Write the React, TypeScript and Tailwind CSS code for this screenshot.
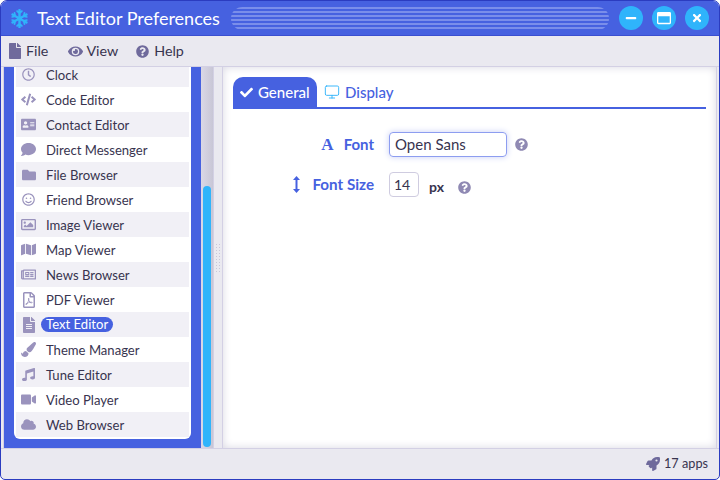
import React from "react";
import { FaFile, FaEye, FaQuestionCircle, FaRegClock, FaCode, FaAddressCard, FaComment, FaFolder, FaRegSmile, FaRegImage, FaMap, FaRegNewspaper, FaRegFilePdf, FaFileAlt, FaPaintBrush, FaMusic, FaVideo, FaCloud, FaSnowflake, FaCheck, FaRocket, FaMinus, FaRegWindowMaximize, FaTimes } from "react-icons/fa";
import { Monitor } from "lucide-react";

const apps: [string, React.ComponentType<{ className?: string }>, string][] = [
  ["Clock", FaRegClock, "text-[13px]"],
  ["Code Editor", FaCode, "text-[15px]"],
  ["Contact Editor", FaAddressCard, "text-[15px]"],
  ["Direct Messenger", FaComment, "text-[15px]"],
  ["File Browser", FaFolder, "text-[14px]"],
  ["Friend Browser", FaRegSmile, "text-[13px]"],
  ["Image Viewer", FaRegImage, "text-[15px]"],
  ["Map Viewer", FaMap, "text-[15px]"],
  ["News Browser", FaRegNewspaper, "text-[15px]"],
  ["PDF Viewer", FaRegFilePdf, "text-[16px]"],
  ["Text Editor", FaFileAlt, "text-[16px]"],
  ["Theme Manager", FaPaintBrush, "text-[15px]"],
  ["Tune Editor", FaMusic, "text-[13px]"],
  ["Video Player", FaVideo, "text-[15px]"],
  ["Web Browser", FaCloud, "text-[15px]"],
];

export default function App() {
  return (
    <div className="w-[720px] h-[480px] flex flex-col overflow-hidden rounded-t-[7px] rounded-b-[5px] border border-[#2b3cc0] bg-[#eae9f0] font-['Lato',sans-serif] text-[#38344f]">
      <div className="h-[35px] shrink-0 flex items-center bg-[#4661e0] border-b border-[#3a4fd0]">
        <FaSnowflake className="ml-[9px] text-[19px] text-[#2fb4fb]" />
        <div className="ml-[8px] text-[18px] text-white whitespace-nowrap">Text Editor Preferences</div>
        <div className="ml-[11px] w-[378px] h-[23px] rounded-full bg-[repeating-linear-gradient(to_bottom,#7a8eea_0,#7a8eea_2px,#4661e0_2px,#4661e0_4px)]" />
        <div className="ml-[10px] flex gap-[9px]">
          <div className="w-6 h-6 rounded-full bg-[#2fb4fb] flex items-center justify-center text-white text-[12px]"><FaMinus /></div>
          <div className="w-6 h-6 rounded-full bg-[#2fb4fb] flex items-center justify-center text-white text-[14px]"><FaRegWindowMaximize /></div>
          <div className="w-6 h-6 rounded-full bg-[#2fb4fb] flex items-center justify-center text-white text-[12px]"><FaTimes /></div>
        </div>
      </div>
      <div className="h-[30px] shrink-0 flex items-center pl-[6px] text-[14.3px] bg-[#eae9f0]">
        <div className="flex items-center gap-[3px]"><FaFile className="text-[16px] text-[#6f6a9c]" />File</div>
        <div className="ml-[20px] flex items-center gap-[3px]"><FaEye className="text-[15px] text-[#6f6a9c]" />View</div>
        <div className="ml-[18px] flex items-center gap-[5px]"><FaQuestionCircle className="text-[13px] text-[#6f6a9c]" />Help</div>
      </div>
      <div className="h-[383px] shrink-0 flex border-y border-[#d3d0e4]">
        <div className="w-[210px] ml-[2px] shrink-0 flex bg-[#4661e0] overflow-hidden border-l border-[#d3d0e4]">
          <div className="ml-[10px] w-[177px] h-[372px] bg-white rounded-b-[6px] px-[2px] pb-[2px] shrink-0 overflow-hidden">
            <div className="mt-[-5px]">
              {apps.map(([name, Icon, size], i) => (
                <div key={name} className={`h-[25px] flex items-center text-[13.1px] ${i % 2 === 0 ? "bg-[#f1f0f6]" : "bg-white"}`}>
                  <div className={`w-[25px] flex justify-center text-[#9a93bd] ${size}`}><Icon /></div>
                  {name === "Text Editor" ? (
                    <span className="bg-[#4661e0] text-white rounded-full px-[5px] h-[15px] leading-[15px]">{name}</span>
                  ) : (
                    <span className="ml-[5px] mt-[2px]">{name}</span>
                  )}
                </div>
              ))}
            </div>
          </div>
          <div className="ml-[10px] w-[12px] bg-gradient-to-r from-[#dad8e6] to-[#c8c6d6] flex flex-col justify-end items-center shrink-0">
            <div className="w-[8px] h-[261px] mb-[1px] rounded-full bg-[#2fb4fb]" />
          </div>
        </div>
        <div className="w-[10px] shrink-0 flex items-center justify-center border-x border-[#d3d0e4]">
          <div className="w-[6px] h-[30px] bg-[radial-gradient(circle,#c9c7d8_1px,transparent_1px)] bg-[length:3px_3px]" />
        </div>
        <div className="w-[494px] shrink-0 bg-white border-r border-[#d3d0e4] shadow-[inset_0_0_8px_#d8d7e2] pl-[10px] pt-[10px]">
          <div className="flex h-[32px] border-b-2 border-[#4661e0] w-[473px] text-[15px] font-medium">
            <div className="w-[84px] h-[30px] bg-[#4661e0] text-white rounded-t-[10px] flex items-center pl-[7px] gap-[5px]"><FaCheck className="text-[13px]" />General</div>
            <div className="ml-[7px] flex items-center gap-[5px] text-[#4661e0]"><Monitor size={16} strokeWidth={1.4} className="text-[#2fb4fb]" />Display</div>
          </div>
          <div className="mt-[23px] flex items-center h-[25px]">
            <div className="w-[141px] flex justify-end items-center gap-[10px] text-[#4661e0] font-bold text-[15px]"><span className="font-['Liberation_Serif',serif] text-[17px] leading-none">A</span>Font</div>
            <div className="ml-[15px] w-[118px] h-[25px] rounded-[4px] border border-[#8d9df0] shadow-[0_0_6px_#c9cff5] flex items-center pl-[5px] text-[15px]">Open Sans</div>
            <FaQuestionCircle className="ml-[8px] text-[13px] text-[#8f89b3]" />
          </div>
          <div className="mt-[15px] flex items-center h-[25px]">
            <div className="w-[141px] flex justify-end items-center gap-[12px] text-[#4661e0] font-bold text-[15.2px]">
              <svg width="7" height="17" viewBox="0 0 7 17" fill="currentColor" aria-hidden="true"><path d="M3.5 0 7 4H4.5v9H7l-3.5 4L0 13h2.5V4H0z" /></svg>
              Font Size
            </div>
            <div className="ml-[15px] w-[30px] h-[25px] rounded-[4px] border border-[#cfcce0] flex items-center pl-[4px] text-[14px]">14</div>
            <div className="ml-[10px] mt-[3px] font-bold text-[14px]">px</div>
            <FaQuestionCircle className="ml-[14px] mt-[5px] text-[13px] text-[#8f89b3]" />
          </div>
        </div>
      </div>
      <div className="flex-1 flex items-center justify-end pr-[11px] text-[12.7px] gap-[4px]">
        <FaRocket className="text-[14px] text-[#6f6a9c]" />17 apps
      </div>
    </div>
  );
}
